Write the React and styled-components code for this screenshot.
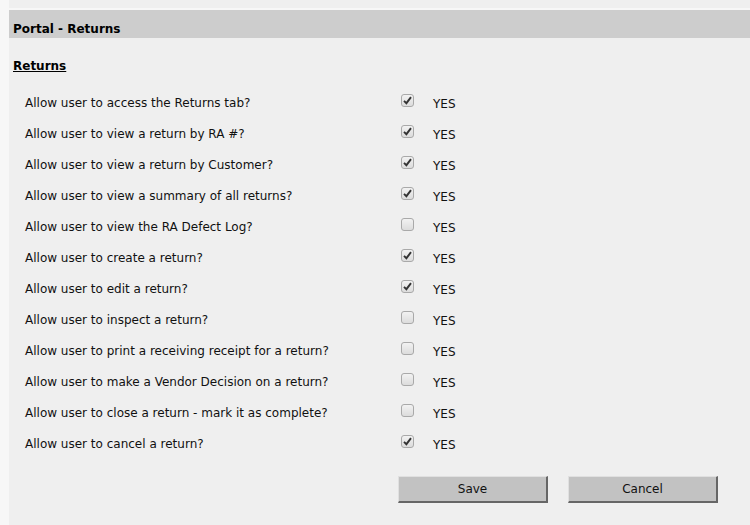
import React, { useState } from 'react'
import styled, { createGlobalStyle } from 'styled-components'

const GlobalStyle = createGlobalStyle`
    html, body {
        margin: 0;
        padding: 0;
        background: #f7f7f7;
    }
    body {
        font-family: "DejaVu Sans", Verdana, sans-serif;
        color: #111;
    }
`;

const Page = styled.div`
    margin-left: 9px;
    min-height: 525px;
    background: #efefef;
    padding-top: 8px;
    box-sizing: border-box;
`;

const Header = styled.div`
    height: 30px;
    border-top: 2px solid #f7f7f7;
    background: #cdcdcd;
    display: flex;
    align-items: flex-end;
    padding: 0 0 2px 4px;
    box-sizing: border-box;
    font-size: 12px;
    font-weight: bold;
    color: #000;
`;

const SectionTitle = styled.div`
    margin: 21px 0 0 4px;
    font-size: 12px;
    font-weight: bold;
    text-decoration: underline;
    color: #000;
`;

const List = styled.div`
    margin-top: 14px;
    display: flex;
    flex-direction: column;
`;

const Row = styled.div`
    display: grid;
    grid-template-columns: 376px 32px auto;
    align-items: center;
    height: 31px;
    padding-left: 16px;
    font-size: 12px;
`;

const Label = styled.span`
    color: #111;
`;

const Box = styled.span`
    width: 11px;
    height: 11px;
    border: 1px solid #a9a9a9;
    border-radius: 3px;
    background: linear-gradient(#f2f2f2, #dcdcdc);
    display: flex;
    align-items: center;
    justify-content: center;
    cursor: pointer;
    margin-top: -4px;
`;

const Yes = styled.span`
    color: #111;
    margin-top: 2px;
`;

const Buttons = styled.div`
    display: flex;
    gap: 20px;
    margin: 17px 0 0 389px;
`;

const Button = styled.button`
    width: 150px;
    height: 27px;
    background: #c2c2c2;
    border: 1px solid;
    border-color: #e0e0e0 #666 #666 #e0e0e0;
    border-width: 1px 2px 2px 1px;
    font-family: "DejaVu Sans", Verdana, sans-serif;
    font-size: 12px;
    color: #111;
    padding: 0;
`;

const Check = () => (
    <svg width="9" height="9" viewBox="0 0 9 9">
        <path d="M1 4.8 L3.4 7.2 L8 1.2" fill="none" stroke="#333" strokeWidth="1.9" />
    </svg>
);

const rows = [
    ['Allow user to access the Returns tab?', true],
    ['Allow user to view a return by RA #?', true],
    ['Allow user to view a return by Customer?', true],
    ['Allow user to view a summary of all returns?', true],
    ['Allow user to view the RA Defect Log?', false],
    ['Allow user to create a return?', true],
    ['Allow user to edit a return?', true],
    ['Allow user to inspect a return?', false],
    ['Allow user to print a receiving receipt for a return?', false],
    ['Allow user to make a Vendor Decision on a return?', false],
    ['Allow user to close a return - mark it as complete?', false],
    ['Allow user to cancel a return?', true],
];

const App = () => {
    const [values, setValues] = useState(rows.map((r) => r[1]));

    const toggle = (i) => setValues(values.map((v, j) => (j === i ? !v : v)));

    return (
        <>
            <GlobalStyle />
            <Page>
                <Header>Portal - Returns</Header>
                <SectionTitle>Returns</SectionTitle>
                <List>
                    {rows.map((row, i) => (
                        <Row key={i}>
                            <Label>{row[0]}</Label>
                            <Box onClick={() => toggle(i)}>{values[i] && <Check />}</Box>
                            <Yes>YES</Yes>
                        </Row>
                    ))}
                </List>
                <Buttons>
                    <Button>Save</Button>
                    <Button>Cancel</Button>
                </Buttons>
            </Page>
        </>
    )
}

export default App
